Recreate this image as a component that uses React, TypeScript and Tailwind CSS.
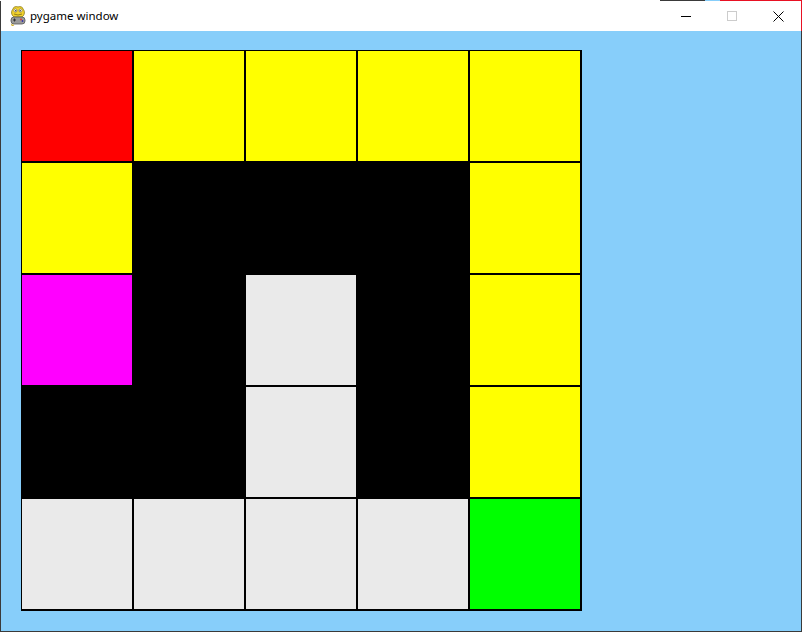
const R = "bg-[#ff0000]";
const Y = "bg-[#ffff00]";
const K = "bg-black";
const M = "bg-[#ff00ff]";
const G = "bg-[#eaeaea]";
const N = "bg-[#00ff00]";

const board = [
  [R, Y, Y, Y, Y],
  [Y, K, K, K, Y],
  [M, K, G, K, Y],
  [K, K, G, K, Y],
  [G, G, G, G, N],
];

const PygameIcon = () => (
  <svg width="18" height="20" viewBox="0 0 18 20">
    <path d="M4 3 C4 1 7 0 9 1 C11 0 14 1 14 3 C16 5 16 9 13 11 L5 11 C2 9 2 5 4 3 Z" fill="#f2d22e" stroke="#8a7a1a" strokeWidth="0.8" />
    <circle cx="6.5" cy="4.5" r="1.6" fill="#fff" stroke="#555" strokeWidth="0.5" />
    <circle cx="11.5" cy="4.5" r="1.6" fill="#fff" stroke="#555" strokeWidth="0.5" />
    <circle cx="6.8" cy="4.7" r="0.7" fill="#222" />
    <circle cx="11.2" cy="4.7" r="0.7" fill="#222" />
    <path d="M5 8 Q9 10 13 8" stroke="#7a6a10" strokeWidth="0.8" fill="none" />
    <rect x="2" y="11" width="14" height="7" rx="3" fill="#9a9a9a" stroke="#555" strokeWidth="0.8" />
    <rect x="4" y="13.5" width="3" height="1" fill="#333" />
    <rect x="5" y="12.5" width="1" height="3" fill="#333" />
    <circle cx="12" cy="13.5" r="0.9" fill="#d33" />
    <circle cx="13.5" cy="15" r="0.9" fill="#33a" />
    <path d="M3 18 Q2 20 5 19" stroke="#c9a820" strokeWidth="1.2" fill="none" />
  </svg>
);

export default function App() {
  return (
    <div className="w-[802px] h-[632px] flex flex-col bg-white">
      <div className="h-px flex">
        <div className="flex-1 bg-white" />
        <div className="w-[45px] bg-[#3a3a3a]" />
        <div className="w-[15px] bg-[#87cefa]" />
        <div className="w-[82px] bg-[#e81123]" />
      </div>
      <div className="flex-1 flex">
        <div className="w-px bg-[#3a3a3a]" />
        <div className="flex-1 flex flex-col">
          <div className="h-[30px] flex items-center bg-white">
            <div className="ml-[8px] w-[18px] flex items-center">
              <PygameIcon />
            </div>
            <span className="ml-[3px] text-[11.5px] text-black font-['Noto_Sans',sans-serif] leading-none">
              pygame window
            </span>
            <div className="ml-auto flex h-full">
              <div className="w-[46px] flex items-center justify-center">
                <div className="w-[10px] h-px bg-black" />
              </div>
              <div className="w-[46px] flex items-center justify-center">
                <div className="w-[10px] h-[10px] border border-[#cccccc]" />
              </div>
              <div className="w-[46px] flex items-center justify-center">
                <svg width="11" height="11" viewBox="0 0 11 11">
                  <path d="M0.5 0.5 L10.5 10.5 M10.5 0.5 L0.5 10.5" stroke="#000" strokeWidth="1" />
                </svg>
              </div>
            </div>
          </div>
          <div className="flex-1 bg-[#87cefa] pl-[20px] pt-[19px]">
            <div className="inline-grid grid-cols-[repeat(5,110px)] grid-rows-[repeat(5,110px)] gap-[2px] bg-black pt-px pl-px pr-[2px] pb-[2px]">
              {board.flat().map((color, i) => (
                <div key={i} className={color} />
              ))}
            </div>
          </div>
          <div className="h-px bg-[#3a3a3a]" />
        </div>
        <div className="w-px flex flex-col">
          <div className="h-[30px] bg-[#e81123]" />
          <div className="flex-1 bg-[#3a3a3a]" />
        </div>
      </div>
    </div>
  );
}
